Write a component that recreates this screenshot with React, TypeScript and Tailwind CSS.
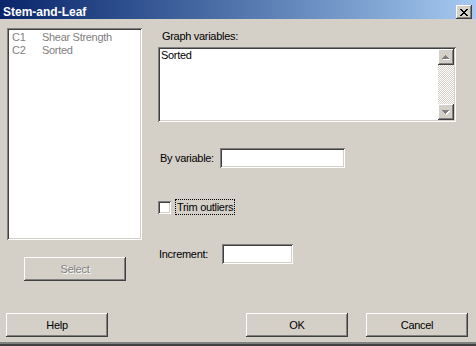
import React from "react";

const raised =
  "bg-[#d4d0c8] shadow-[inset_-1px_-1px_#404040,inset_1px_1px_#ffffff,inset_-2px_-2px_#808080,inset_2px_2px_#d4d0c8]";
const sunken =
  "bg-white shadow-[inset_1px_1px_#808080,inset_-1px_-1px_#ffffff,inset_2px_2px_#404040,inset_-2px_-2px_#d4d0c8]";

function CloseX() {
  const rows = [
    "XX....XX",
    ".XX..XX.",
    "..XXXX..",
    "...XX...",
    "..XXXX..",
    ".XX..XX.",
    "XX....XX",
  ];
  return (
    <svg width="8" height="7" viewBox="0 0 8 7" shapeRendering="crispEdges">
      {rows.map((r, y) =>
        r.split("").map((c, x) =>
          c === "X" ? <rect key={`${x}-${y}`} x={x} y={y} width="1" height="1" fill="#000" /> : null
        )
      )}
    </svg>
  );
}

function Arrow({ up }: { up: boolean }) {
  const pts = up ? "3.5,0 7,4 0,4" : "0,0 7,0 3.5,4";
  return (
    <svg width="8" height="5" viewBox="0 0 8 5" shapeRendering="crispEdges">
      <polygon points={pts} fill="#ffffff" transform="translate(1,1)" />
      <polygon points={pts} fill="#808080" />
    </svg>
  );
}

function Btn({ label, disabled, className }: { label: string; disabled?: boolean; className: string }) {
  return (
    <div
      className={`${raised} ${className} h-[24px] w-[102px] flex items-center justify-center ${
        disabled ? "text-[#808080] [text-shadow:1px_1px_0_#ffffff]" : "text-black"
      }`}
    >
      {label}
    </div>
  );
}

export default function App() {
  return (
    <div className="w-[476px] h-[346px] bg-[#d4d0c8] font-['Liberation_Sans',Arial,sans-serif] text-[11px] leading-[13px] tracking-[-0.3px] text-black flex flex-col overflow-hidden">
      {/* Title bar */}
      <div className="h-[19px] flex items-start justify-between bg-linear-to-r from-[#0a246a] to-[#a6caf0] shrink-0">
        <div className="pl-[3px] pt-[5px] text-[12px] leading-[14px] font-bold text-white tracking-normal">Stem-and-Leaf</div>
        <div className={`${raised} mt-[5px] mr-[4px] w-[16px] h-[14px] flex items-center justify-center`}>
          <CloseX />
        </div>
      </div>

      {/* Top section */}
      <div className="flex items-start">
        {/* Left column */}
        <div className="ml-[7px] mt-[9px] flex flex-col">
          <div className={`${sunken} w-[135px] h-[212px] pt-[3px] pl-[5px] text-[#808080]`}>
            <div className="flex">
              <span className="w-[30px]">C1</span>
              <span>Shear Strength</span>
            </div>
            <div className="flex">
              <span className="w-[30px]">C2</span>
              <span>Sorted</span>
            </div>
          </div>
          <Btn label="Select" disabled className="mt-[17px] ml-[17px]" />
        </div>

        {/* Right column */}
        <div className="ml-[16px] flex flex-col">
          <div className="mt-[11px] pl-[4px]">Graph variables:</div>
          <div className={`${sunken} mt-[4px] w-[298px] h-[75px] flex`}>
            <div className="flex-1 pt-[2px] pl-[3px]">Sorted</div>
            <div className="w-[16px] my-[2px] mr-[2px] flex flex-col">
              <div className={`${raised} h-[16px] flex items-center justify-center`}>
                <Arrow up />
              </div>
              <div className="flex-1 bg-[image:repeating-conic-gradient(#ffffff_0_25%,#d4d0c8_0_50%)] bg-[length:2px_2px]" />
              <div className={`${raised} h-[16px] flex items-center justify-center`}>
                <Arrow up={false} />
              </div>
            </div>
          </div>

          <div className="mt-[26px] flex items-center h-[20px]">
            <div className="w-[62px] pl-[2px]">By variable:</div>
            <div className={`${sunken} w-[125px] h-[20px]`} />
          </div>

          <div className="mt-[31px] flex items-center h-[16px]">
            <div className={`${sunken} w-[13px] h-[13px]`} />
            <div className="ml-[4px] h-[16px] border border-dotted border-black px-[1px] leading-[14px]">
              Trim outliers
            </div>
          </div>

          <div className="mt-[29px] flex items-center h-[20px]">
            <div className="w-[64px] pl-[1px]">Increment:</div>
            <div className={`${sunken} w-[71px] h-[20px]`} />
          </div>
        </div>
      </div>

      {/* Bottom buttons */}
      <div className="mt-[32px] flex">
        <Btn label="Help" className="ml-[6px]" />
        <Btn label="OK" className="ml-[138px]" />
        <Btn label="Cancel" className="ml-[18px]" />
      </div>

      <div className="flex-1" />
      <div className="h-[4px] bg-[#808080] border-b-2 border-[#404040]" />
    </div>
  );
}
